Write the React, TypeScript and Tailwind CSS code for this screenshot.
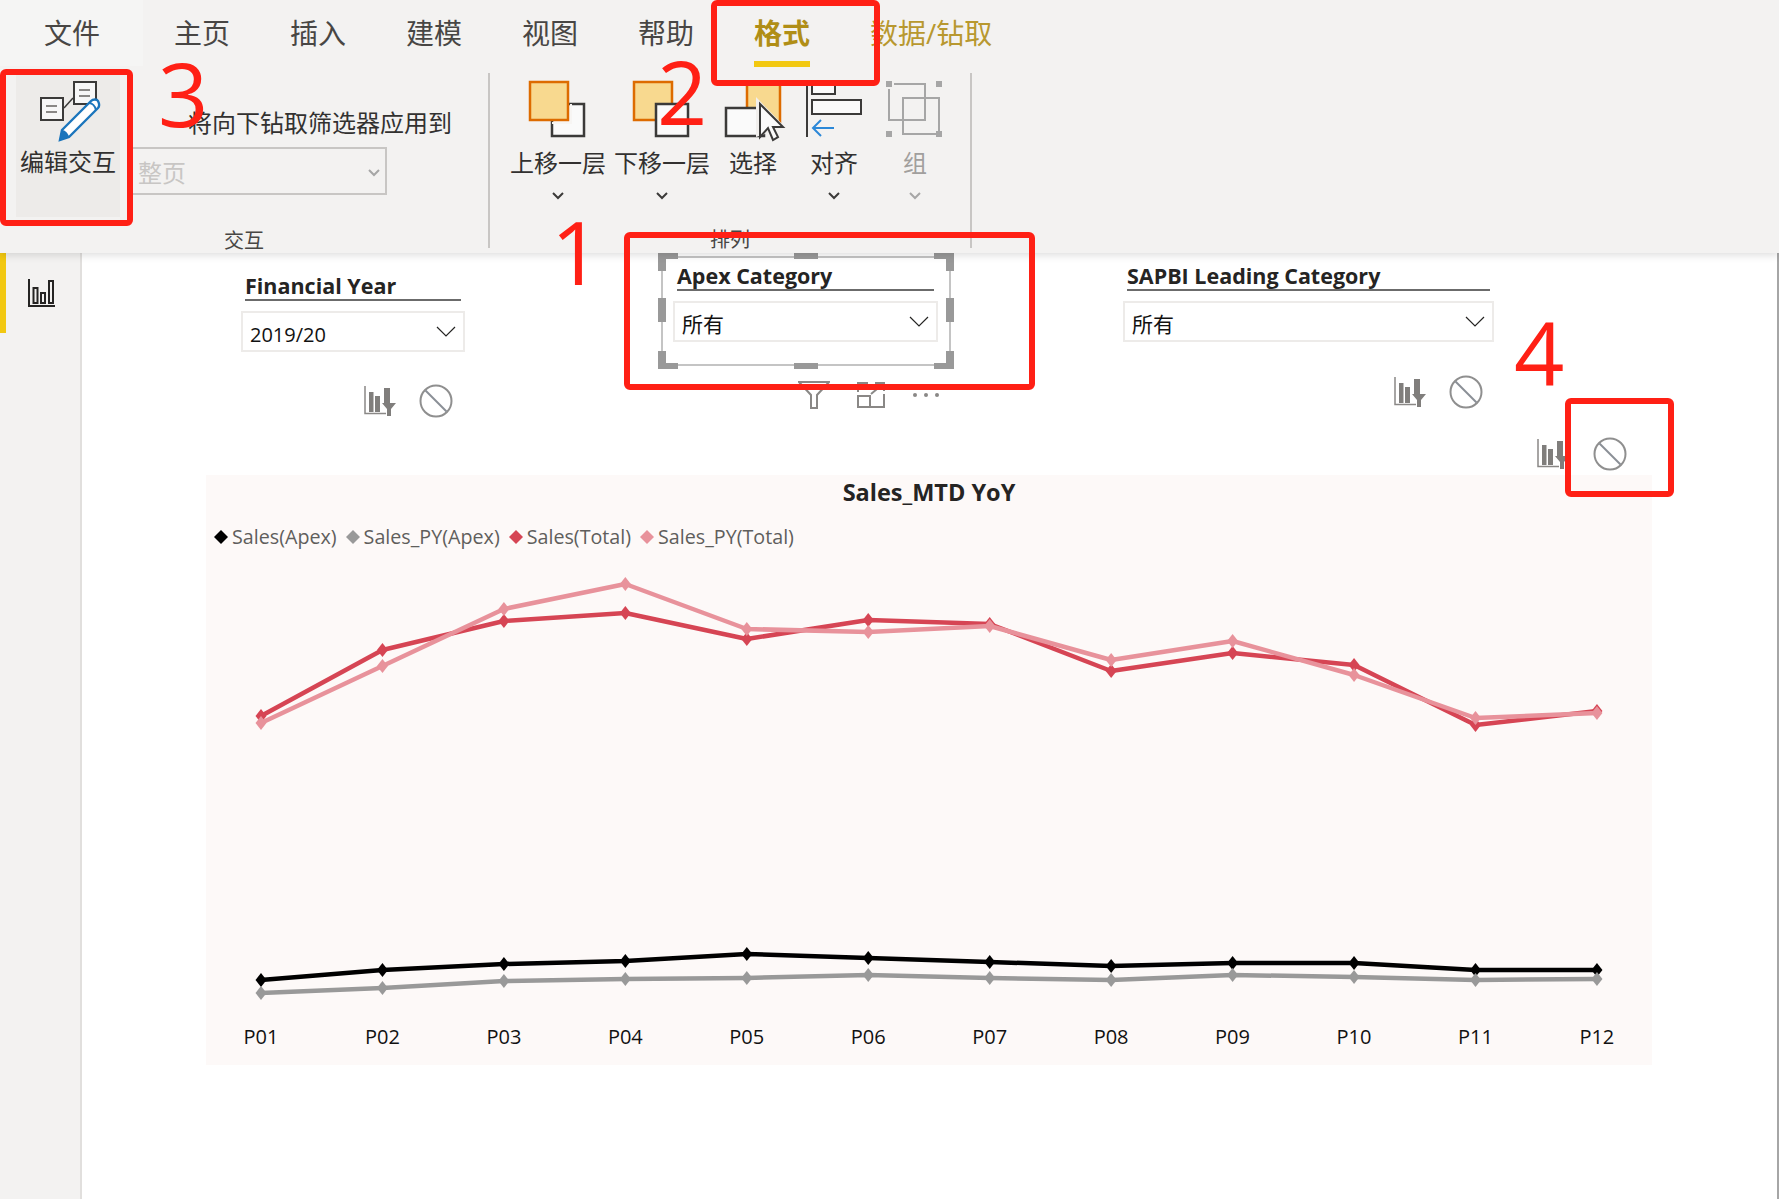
const TABS = ["主页", "插入", "建模", "视图", "帮助"];
const PERIODS = ["P01", "P02", "P03", "P04", "P05", "P06", "P07", "P08", "P09", "P10", "P11", "P12"];

// chart values are plotted in page pixels, viewBox of the svg below follows them
const SERIES = [
  { color: "#000000", ys: [979, 969, 963, 960, 953, 957, 961, 965, 962, 962, 969, 969] },
  { color: "#999999", ys: [992, 987, 980, 978, 977, 974, 977, 979, 974, 976, 979, 978] },
  { color: "#d64554", ys: [715, 649, 620, 612, 638, 619, 623, 670, 652, 664, 724, 710] },
  { color: "#e8929b", ys: [722, 665, 608, 583, 628, 631, 625, 659, 640, 674, 717, 712] },
];

const LEGEND = [
  { label: "Sales(Apex)", color: "#000000" },
  { label: "Sales_PY(Apex)", color: "#999999" },
  { label: "Sales(Total)", color: "#d64554" },
  { label: "Sales_PY(Total)", color: "#e8929b" },
];

const pointX = (i: number) => 261 + i * 121.45;

function Chevron({ gray }: { gray?: boolean }) {
  return (
    <svg width="14" height="10" viewBox="0 0 14 10" className="shrink-0">
      <path d="M2 2l5 5 5-5" fill="none" stroke={gray ? "#a6a6a6" : "#3b3a39"} strokeWidth="2" />
    </svg>
  );
}

function ThinChevron() {
  return (
    <svg width="20" height="11" viewBox="0 0 20 11" className="shrink-0">
      <path d="M1 1l9 9 9-9" fill="none" stroke="#252423" strokeWidth="1.2" />
    </svg>
  );
}

function BarFilterIcon() {
  return (
    <svg width="32" height="30" viewBox="0 0 32 30" className="shrink-0">
      <path d="M1 0v27.5h21" fill="none" stroke="#8a8886" strokeWidth="1.5" />
      <rect x="5" y="6" width="4.5" height="20" fill="#807e7c" />
      <rect x="11" y="10" width="5" height="16" fill="#807e7c" />
      <rect x="20" y="2" width="6" height="15" fill="#807e7c" />
      <polygon points="18,17 32,17 27,23 27,30 23,30 23,23" fill="#807e7c" />
    </svg>
  );
}

function NoSymbol() {
  return (
    <svg width="34" height="34" viewBox="0 0 34 34" className="shrink-0">
      <circle cx="17" cy="17" r="15.5" fill="none" stroke="#8f8f8f" strokeWidth="2" />
      <path d="M6.5 6.5l21 21" stroke="#8a8f96" strokeWidth="2" />
    </svg>
  );
}

function EditIcon() {
  return (
    <svg width="70" height="66" viewBox="33 78 70 66" className="shrink-0">
      <path d="M64 108l9-10" stroke="#3b3a39" strokeWidth="1.5" />
      <rect x="41" y="98" width="22" height="22" fill="#f7f7f7" stroke="#3b3a39" strokeWidth="2" />
      <rect x="74" y="82" width="22" height="22" fill="#f7f7f7" stroke="#3b3a39" strokeWidth="2" />
      <path d="M46 106h11M46 112h11M79 90h11M79 96h11" stroke="#8a8886" strokeWidth="2" />
      <path d="M62 130l29-29c2-2 6-2 7 0s2 5 0 7l-29 29-9 3z" fill="#fff" stroke="#1b75bc" strokeWidth="2.4" />
      <path d="M59 141l3-11c3 0 6 3 7 7z" fill="#1b75bc" />
      <path d="M89 103c3 0 6 3 7 7" fill="none" stroke="#1b75bc" strokeWidth="2" />
    </svg>
  );
}

function MoveUpIcon() {
  return (
    <svg width="62" height="64" viewBox="528 76 62 64" className="shrink-0">
      <rect x="553" y="104" width="32" height="32" fill="#fafafa" stroke="#3b3a39" strokeWidth="2.5" />
      <rect x="531" y="82" width="38" height="38" fill="#f8d98f" stroke="#dd6b00" strokeWidth="2.5" />
      <path d="M572 104v19h-19" fill="none" stroke="#f7f5f3" strokeWidth="2" />
    </svg>
  );
}

function MoveDownIcon() {
  return (
    <svg width="62" height="64" viewBox="632 76 62 64" className="shrink-0">
      <rect x="635" y="82" width="38" height="38" fill="#f8d98f" stroke="#dd6b00" strokeWidth="2.5" />
      <rect x="657" y="104" width="32" height="32" fill="#fafafa" stroke="#3b3a39" strokeWidth="2.5" />
    </svg>
  );
}

function SelectIcon() {
  return (
    <svg width="68" height="68" viewBox="720 76 68 68" className="shrink-0">
      <rect x="748" y="84" width="33" height="38" fill="#f8d98f" stroke="#dd6b00" strokeWidth="2.5" />
      <rect x="727" y="108" width="38" height="28" fill="#fafafa" stroke="#3b3a39" strokeWidth="2.5" />
      <path d="M757 97l30 31-6 1 0 0-24 8z" fill="#f1efed" />
      <path d="M761 104v33l8-9 5 12 5-3-5-10h10z" fill="#fafafa" stroke="#3b3a39" strokeWidth="2" />
    </svg>
  );
}

function AlignIcon() {
  return (
    <svg width="60" height="64" viewBox="804 76 60 64" className="shrink-0">
      <path d="M807 82v55" stroke="#3b3a39" strokeWidth="2" />
      <rect x="812" y="82" width="23" height="12" fill="#fafafa" stroke="#3b3a39" strokeWidth="2" />
      <rect x="812" y="100" width="49" height="14" fill="#fafafa" stroke="#3b3a39" strokeWidth="2" />
      <path d="M834 128h-21M821 120l-8 8 8 8" fill="none" stroke="#2b88d8" strokeWidth="2" />
    </svg>
  );
}

function GroupIcon() {
  return (
    <svg width="60" height="64" viewBox="885 76 60 64" className="shrink-0">
      <g fill="none" stroke="#a6a6a6" strokeWidth="2">
        <path d="M894 84h31v36h-36v-31" />
        <rect x="903" y="98" width="36" height="36" />
      </g>
      <g fill="#a6a6a6">
        <rect x="886" y="81" width="6" height="6" />
        <rect x="936" y="81" width="6" height="6" />
        <rect x="886" y="131" width="6" height="6" />
        <rect x="936" y="131" width="6" height="6" />
      </g>
    </svg>
  );
}

function RibbonButton({
  label,
  width,
  margin,
  icon,
  muted,
  noChevron,
}: {
  label: string;
  width: string;
  margin: string;
  icon: React.ReactNode;
  muted?: boolean;
  noChevron?: boolean;
}) {
  return (
    <div className={`flex shrink-0 flex-col items-center ${width} ${margin}`}>
      <div className="flex h-[69px] items-start justify-center">{icon}</div>
      <div className={`h-[36px] whitespace-nowrap text-[24px] leading-[36px] ${muted ? "text-[#a19f9d]" : "text-[#323130]"}`}>
        {label}
      </div>
      <div className="mt-[10px] flex h-[10px] items-center">{!noChevron && <Chevron gray={muted} />}</div>
    </div>
  );
}

function Slicer({
  title,
  value,
  className,
  width,
  valueSize,
}: {
  title: string;
  value: string;
  className: string;
  width: string;
  valueSize: string;
}) {
  return (
    <div className={`absolute ${className} ${width}`}>
      <div className="mx-[4px] h-[30px] whitespace-nowrap border-b-2 border-[#6b6b6b] text-[21.5px] font-bold leading-[30px] text-[#252423]">
        {title}
      </div>
      <div className="mt-[10px] flex h-[41px] items-center justify-between border-2 border-[#edebe9] bg-white pl-[7px] pr-[7px] text-[#111]">
        <span className={`pt-[6px] ${valueSize}`}>{value}</span>
        <ThinChevron />
      </div>
    </div>
  );
}

function SelectionFrame() {
  const handle = "absolute bg-[#999999]";
  return (
    <div className="absolute left-[576px] top-0 h-[116px] w-[296px]">
      <div className="absolute inset-[3px] border-2 border-[#c4c4c4]" />
      <div className={`${handle} left-0 top-0 h-[6px] w-[20px]`} />
      <div className={`${handle} left-0 top-0 h-[18px] w-[8px]`} />
      <div className={`${handle} right-0 top-0 h-[6px] w-[20px]`} />
      <div className={`${handle} right-0 top-0 h-[18px] w-[8px]`} />
      <div className={`${handle} bottom-0 left-0 h-[6px] w-[20px]`} />
      <div className={`${handle} bottom-0 left-0 h-[18px] w-[8px]`} />
      <div className={`${handle} bottom-0 right-0 h-[6px] w-[20px]`} />
      <div className={`${handle} bottom-0 right-0 h-[18px] w-[8px]`} />
      <div className={`${handle} left-[136px] top-0 h-[6px] w-[24px]`} />
      <div className={`${handle} bottom-0 left-[136px] h-[6px] w-[24px]`} />
      <div className={`${handle} left-0 top-[45px] h-[24px] w-[8px]`} />
      <div className={`${handle} right-0 top-[45px] h-[24px] w-[8px]`} />
    </div>
  );
}

function Diamond({ color }: { color: string }) {
  return (
    <svg width="14" height="14" viewBox="0 0 14 14" className="shrink-0">
      <polygon points="7,0 14,7 7,14 0,7" fill={color} />
    </svg>
  );
}

function Chart() {
  return (
    <div className="absolute left-[124px] top-[222px] flex h-[590px] w-[1446px] flex-col bg-[#fdf9f8]">
      <div className="h-[34px] text-center text-[23.5px] font-bold leading-[34px] text-[#252423]">Sales_MTD YoY</div>
      <div className="mt-[11px] flex h-[34px] items-center gap-[9px] pl-[8px] text-[19.7px] text-[#605e5c]">
        {LEGEND.map((item) => (
          <div key={item.label} className="flex items-center gap-[4px]">
            <Diamond color={item.color} />
            <span>{item.label}</span>
          </div>
        ))}
      </div>
      <svg width="1446" height="465" viewBox="206 553 1446 465" className="shrink-0">
        {SERIES.map((s) => (
          <g key={s.color}>
            <polyline
              points={s.ys.map((y, i) => `${pointX(i)},${y}`).join(" ")}
              fill="none"
              stroke={s.color}
              strokeWidth="4.5"
              strokeLinejoin="round"
            />
            {s.ys.map((y, i) => {
              const x = pointX(i);
              return (
                <polygon
                  key={i}
                  points={`${x},${y - 7} ${x + 5.5},${y} ${x},${y + 7} ${x - 5.5},${y}`}
                  fill={s.color}
                />
              );
            })}
          </g>
        ))}
      </svg>
      <div className="ml-[-5.7px] grid grid-cols-[repeat(12,121.45px)] text-center text-[20px] leading-[36px] text-[#111]">
        {PERIODS.map((p) => (
          <div key={p}>{p}</div>
        ))}
      </div>
    </div>
  );
}

function Annotations() {
  const box = "absolute rounded-[6px] border-[6px] border-[#ff2015]";
  const num = "absolute text-[88px] font-normal leading-none text-[#ff2015]";
  return (
    <>
      <div className={`${box} left-0 top-[69px] h-[157px] w-[133px]`} />
      <div className={`${box} left-[711px] top-0 h-[86px] w-[169px]`} />
      <div className={`${box} left-[624px] top-[232px] h-[158px] w-[411px]`} />
      <div className={`${box} left-[1565px] top-[398px] h-[99px] w-[109px]`} />
      <div className={`${num} left-[158px] top-[49px]`}>3</div>
      <div className={`${num} left-[657px] top-[47px]`}>2</div>
      <div className={`${num} left-[551px] top-[207px]`}>1</div>
      <div className={`${num} left-[1514px] top-[308px]`}>4</div>
    </>
  );
}

export default function App() {
  return (
    <div className="relative flex h-[1199px] w-full flex-col overflow-hidden bg-white font-['Open_Sans','Noto_Sans_CJK_SC',sans-serif]">
      {/* ribbon */}
      <div className="relative z-10 h-[253px] shrink-0 bg-[#f3f2f1] shadow-[0_2px_8px_rgba(0,0,0,0.14)]">
        <div className="flex h-[66px] text-[28px] leading-[66px] text-[#484644]">
          <div className="w-[143px] bg-[#f5f5f4] pl-[44px]">文件</div>
          <div className="ml-[31px] flex gap-[60px]">
            {TABS.map((t) => (
              <div key={t} className="w-[56px] whitespace-nowrap">
                {t}
              </div>
            ))}
            <div className="relative w-[56px] font-bold text-[#b08e16]">
              格式
              <div className="absolute inset-x-0 top-[61px] h-[6px] bg-[#f2c811]" />
            </div>
            <div className="whitespace-nowrap text-[#b8982f]">数据/钻取</div>
          </div>
        </div>
        <div className="flex h-[187px]">
          <div className="flex w-[488px] shrink-0 flex-col">
            <div className="flex h-[158px]">
              <div className="ml-[16px] mt-[7px] flex h-[144px] w-[104px] shrink-0 flex-col items-center bg-[#edebe9]">
                <div className="mt-[5px]">
                  <EditIcon />
                </div>
                <div className="h-[36px] whitespace-nowrap text-[24px] leading-[36px] text-[#323130]">编辑交互</div>
              </div>
              <div className="ml-[10px] w-[257px]">
                <div className="mt-[39px] h-[36px] whitespace-nowrap pl-[58px] text-[24px] leading-[36px] text-[#323130]">
                  将向下钻取筛选器应用到
                </div>
                <div className="mt-[6px] flex h-[48px] items-center justify-between border-2 border-[#c8c6c4] pl-[6px] pr-[4px] pt-[4px] text-[24px] text-[#c8c6c4]">
                  <span>整页</span>
                  <Chevron gray />
                </div>
              </div>
            </div>
            <div className="h-[29px] text-center text-[20px] leading-[34px] text-[#484644]">交互</div>
          </div>
          <div className="mt-[7px] h-[175px] w-[2px] shrink-0 bg-[#c8c6c4]" />
          <div className="flex w-[480px] shrink-0 flex-col">
            <div className="flex h-[158px] pt-[10px]">
              <RibbonButton label="上移一层" width="w-[96px]" margin="ml-[20px]" icon={<MoveUpIcon />} />
              <RibbonButton label="下移一层" width="w-[96px]" margin="ml-[8px]" icon={<MoveDownIcon />} />
              <RibbonButton label="选择" width="w-[48px]" margin="ml-[19px]" icon={<SelectIcon />} noChevron />
              <RibbonButton label="对齐" width="w-[48px]" margin="ml-[33px]" icon={<AlignIcon />} />
              <RibbonButton label="组" width="w-[24px]" margin="ml-[45px]" icon={<GroupIcon />} muted />
            </div>
            <div className="h-[29px] text-center text-[20px] leading-[32px] text-[#484644]">排列</div>
          </div>
          <div className="mt-[7px] h-[175px] w-[2px] shrink-0 bg-[#c8c6c4]" />
        </div>
      </div>

      {/* body */}
      <div className="flex flex-1">
        <div className="relative flex w-[82px] shrink-0 justify-center border-r-2 border-[#e1dfdd] bg-[#f3f2f1] pt-[26px]">
          <div className="absolute left-0 top-0 h-[80px] w-[6px] bg-[#f2c811]" />
          <svg width="28" height="28" viewBox="0 0 28 28" className="ml-[4px] shrink-0">
            <path d="M1 0v27h26" fill="none" stroke="#252423" strokeWidth="2" />
            <g fill="none" stroke="#252423" strokeWidth="2">
              <rect x="5.5" y="9" width="4" height="15" />
              <rect x="13" y="14" width="4" height="10" />
              <rect x="21" y="2" width="4" height="22" />
            </g>
          </svg>
        </div>
        {/* report canvas, visuals sit where the author dropped them */}
        <div className="relative flex-1 border-r-2 border-[#a6a6a6]">
          <Slicer title="Financial Year" value="2019/20" valueSize="text-[20px]" className="left-[159px] top-[18px]" width="w-[224px]" />
          <Slicer title="Apex Category" value="所有" valueSize="text-[21px]" className="left-[591px] top-[8px]" width="w-[265px]" />
          <Slicer title="SAPBI Leading Category" value="所有" valueSize="text-[21px]" className="left-[1041px] top-[8px]" width="w-[371px]" />
          <SelectionFrame />

          <div className="absolute left-[282px] top-[131px] flex items-center gap-[23px]">
            <BarFilterIcon />
            <NoSymbol />
          </div>
          <div className="absolute left-[1312px] top-[122px] flex items-center gap-[23px]">
            <BarFilterIcon />
            <NoSymbol />
          </div>

          <div className="absolute left-[716px] top-[127px] flex items-center">
            <svg width="32" height="30" viewBox="0 0 32 30" className="shrink-0">
              <path d="M1 2h30L19 15v13h-6V15z" fill="none" stroke="#8a8886" strokeWidth="2" />
            </svg>
            <svg width="30" height="28" viewBox="0 0 30 28" className="ml-[26px] shrink-0">
              <path d="M2 11V2h10M28 13v13H2V15h12v11" fill="none" stroke="#8a8886" strokeWidth="2" />
              <path d="M15 13L27 3M19 2h9v8" fill="none" stroke="#8a8886" strokeWidth="2" />
            </svg>
            <div className="ml-[27px] flex gap-[7px]">
              <div className="h-[4px] w-[4px] rounded-full bg-[#8a8886]" />
              <div className="h-[4px] w-[4px] rounded-full bg-[#8a8886]" />
              <div className="h-[4px] w-[4px] rounded-full bg-[#8a8886]" />
            </div>
          </div>

          <Chart />

          <div className="absolute left-[1455px] top-[184px] flex items-center gap-[24px]">
            <BarFilterIcon />
            <NoSymbol />
          </div>
        </div>
      </div>

      {/* red callouts drawn over the screenshot */}
      <div className="pointer-events-none absolute inset-0 z-20">
        <Annotations />
      </div>
    </div>
  );
}
